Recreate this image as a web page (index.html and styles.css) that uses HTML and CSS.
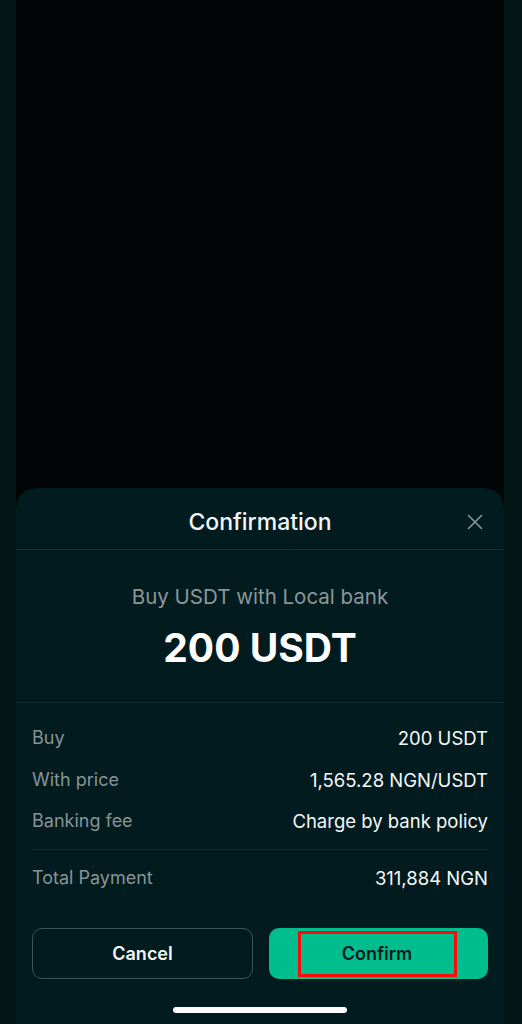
FILE: index.html
```html
<!DOCTYPE html>
<html lang="en">
<head>
<meta charset="utf-8">
<title>Confirmation</title>
<link rel="stylesheet" href="styles.css">
</head>
<body>
<div class="screen">
  <div class="backdrop"></div>
  <section class="sheet">
    <header class="sheet-header">
      <h1 class="title">Confirmation</h1>
      <button class="close" aria-label="Close">
        <svg width="16" height="16" viewBox="0 0 16 16"><path d="M1.5 1.5 L14.5 14.5 M14.5 1.5 L1.5 14.5" stroke="#8a9699" stroke-width="1.6" stroke-linecap="round" fill="none"/></svg>
      </button>
    </header>
    <div class="summary">
      <p class="subtitle">Buy USDT with Local bank</p>
      <p class="amount">200 USDT</p>
    </div>
    <div class="details">
      <div class="row"><span class="label">Buy</span><span class="value">200 USDT</span></div>
      <div class="row"><span class="label">With price</span><span class="value">1,565.28 NGN/USDT</span></div>
      <div class="row"><span class="label">Banking fee</span><span class="value">Charge by bank policy</span></div>
      <div class="divider"></div>
      <div class="row"><span class="label">Total Payment</span><span class="value">311,884 NGN</span></div>
    </div>
    <div class="actions">
      <button class="btn btn-cancel">Cancel</button>
      <button class="btn btn-confirm"><span class="highlight">Confirm</span></button>
    </div>
    <div class="home-bar"></div>
  </section>
</div>
</body>
</html>
```

FILE: styles.css
```css
* { box-sizing: border-box; }
html, body {
  margin: 0;
  padding: 0;
  background: #041517;
  font-family: Inter, "Noto Sans", sans-serif;
}
.screen {
  width: 488px;
  height: 1024px;
  margin-left: 16px;
  display: flex;
  flex-direction: column;
  background: #010506;
}
.backdrop { flex: 1; }
.sheet {
  background: #021b1f;
  border-radius: 20px 20px 0 0;
  display: flex;
  flex-direction: column;
}
.sheet-header {
  height: 62px;
  padding-top: 7px;
  display: flex;
  align-items: center;
  justify-content: center;
  position: relative;
  border-bottom: 1px solid #17302f;
}
.title {
  margin: 0;
  font-size: 23px;
  font-weight: 500;
  color: #f2f5f5;
  line-height: 28px;
}
.close {
  position: absolute;
  right: 21px;
  top: 26px;
  width: 16px;
  height: 16px;
  padding: 0;
  border: none;
  background: none;
  display: flex;
}
.summary {
  padding: 35px 0 30px;
  display: flex;
  flex-direction: column;
  align-items: center;
  gap: 15px;
  border-bottom: 1px solid #17302f;
}
.subtitle {
  margin: 0;
  font-size: 20.5px;
  line-height: 24px;
  color: #8a979a;
}
.amount {
  margin: 0;
  font-size: 39px;
  line-height: 48px;
  font-weight: 700;
  color: #ffffff;
}
.details {
  padding: 23px 16px 0;
  display: flex;
  flex-direction: column;
  gap: 17.5px;
}
.row {
  display: flex;
  justify-content: space-between;
  align-items: center;
  font-size: 18px;
  line-height: 24px;
}
.label { color: #879497; }
.value { color: #f6f8f8; font-size: 18.5px; }
.divider {
  height: 1px;
  background: #17302f;
  margin: -1.5px 0;
}
.actions {
  display: flex;
  gap: 16px;
  padding: 0 16px;
  margin-top: 38px;
}
.btn {
  flex: 1;
  height: 51px;
  border-radius: 10px;
  font-family: Inter, "Noto Sans", sans-serif;
  font-size: 18px;
  font-weight: 600;
  display: flex;
  align-items: center;
  justify-content: center;
  padding: 0;
}
.btn-cancel {
  background: transparent;
  border: 1.5px solid #3e5457;
  color: #f2f5f5;
}
.btn-confirm {
  background: #00bd8e;
  border: none;
  color: #03181a;
}
.highlight {
  width: 159px;
  height: 46px;
  margin-right: 3px;
  border: 3px solid #ff0a0a;
  display: flex;
  align-items: center;
  justify-content: center;
}
.home-bar {
  width: 174px;
  height: 6px;
  border-radius: 3px;
  background: #ffffff;
  margin: 28px auto 11px;
}
```
